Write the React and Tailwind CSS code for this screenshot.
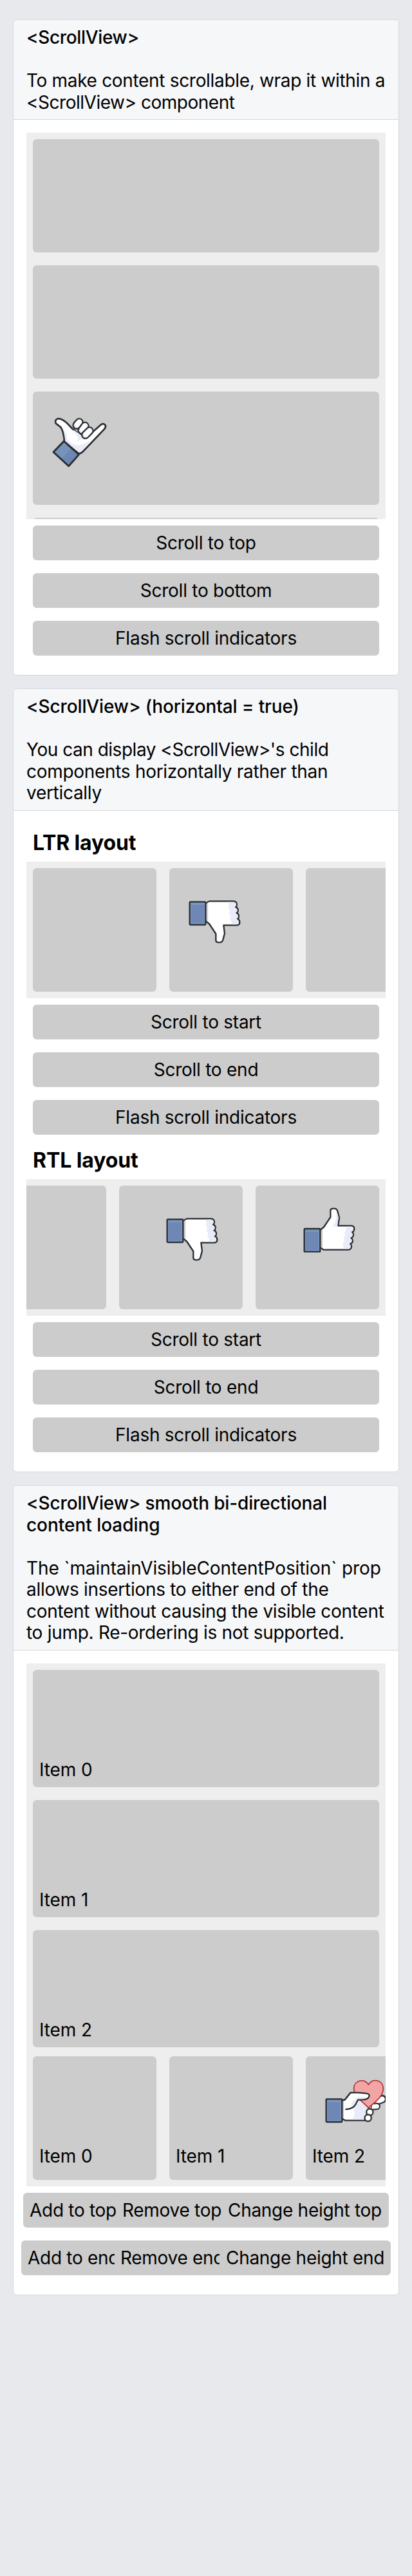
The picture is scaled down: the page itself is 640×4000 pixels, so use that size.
import React from "react";

const INK = "#2b3036";

function Cuff({ x, y }) {
  return (
    <g>
      <rect x={x} y={y} width="74" height="107" rx="3" fill="#6e87b4" stroke={INK} strokeWidth="7" />
      <rect x={x + 5} y={y + 5} width="64" height="9" fill="#7c99b9" />
      <path d={`M${x + 6} ${y + 8}V${y + 101}H${x + 68}V${y + 8}`} fill="none" stroke="#86a0cb" strokeWidth="2.5" />
    </g>
  );
}

function Fist() {
  return (
    <g>
      <path
        d="M121 68Q128 59 137 58H248Q265 59 264 76Q262 84 258 86Q272 90 269 104Q267 112 262 113Q274 117 273 130Q272 138 267 140Q277 144 277 156Q277 170 262 170H202L207 208L199 238Q195 250 185 250H176Q166 249 166 240V210L136 165L121 152Z"
        fill="#fff"
        stroke={INK}
        strokeWidth="7"
        strokeLinejoin="round"
      />
      <path
        d="M222 62H248Q261 62 260 75Q259 82 251 86Q267 92 265 103Q263 111 255 113Q270 119 269 129Q268 138 260 140Q273 147 273 156Q273 165 262 166H237Q244 152 230 138Q241 125 226 114Q237 100 222 88Q232 75 222 62Z"
        fill="#e9ecf8"
      />
      <path d="M125 68V150" stroke="#cfcfcf" strokeWidth="9" />
    </g>
  );
}

function ThumbDown() {
  return (
    <svg className="h-[100px] w-[110px] shrink-0" viewBox="0 0 330 300">
      <Fist />
      <Cuff x={44} y={61} />
    </svg>
  );
}

function ThumbUp() {
  return (
    <svg className="h-[100px] w-[110px] shrink-0" viewBox="0 0 330 300">
      <g transform="matrix(1 0 0 -1 0 300)">
        <Fist />
        <path d="M173 172Q196 176 193 236Q203 222 203 208L197 166Q180 164 173 172Z" fill="#e9ecf8" />
      </g>
      <Cuff x={44} y={144} />
    </svg>
  );
}

function HandFingers() {
  const fingers = [
    [189, 107, 177, 121],
    [216, 124, 201, 145],
    [237, 147, 218, 166],
  ];
  return (
    <svg className="h-[130px] w-[130px] shrink-0" viewBox="0 0 390 390">
      <path
        d="M120 197Q117 152 103 130L80 112Q74 99 87 91Q103 87 128 107L158 138L214 182L252 152L291 118Q303 110 311 121Q315 131 306 139L207 243Q197 254 186 252Z"
        fill="#fff"
        stroke={INK}
        strokeWidth="8"
        strokeLinejoin="round"
      />
      <path
        d="M124 193Q123 158 110 132Q133 155 134 187Q155 216 190 214Q215 206 238 194L204 239Q195 247 187 246Z"
        fill="#e9ecf8"
      />
      <path d="M160 142L184 178Q186 188 172 202Q190 188 212 182L190 160Z" fill="#e9ecf8" />
      {fingers.map(([a, b, c, d]) => (
        <g key={a} strokeLinecap="round">
          <line x1={a} y1={b} x2={c} y2={d} stroke={INK} strokeWidth="40" />
          <line x1={a} y1={b} x2={c} y2={d} stroke="#e9ecf8" strokeWidth="26" />
          <line x1={a + 1} y1={b - 1} x2={c + 4} y2={d - 4} stroke="#fff" strokeWidth="23" />
        </g>
      ))}
      <path d="M118 195L187 258L140 311L69 246Z" fill="#7693b9" stroke={INK} strokeWidth="9" strokeLinejoin="round" />
      <path d="M149 230L181 258L140 304L110 276Z" fill="#6d86b4" />
    </svg>
  );
}

function HandHeart() {
  return (
    <svg className="h-[110px] w-[150px] shrink-0" viewBox="0 0 450 330">
      <g strokeLinecap="round">
        <line x1="282" y1="160" x2="312" y2="148" stroke={INK} strokeWidth="39" />
        <line x1="282" y1="160" x2="311" y2="149" stroke="#fff" strokeWidth="25" />
        <line x1="262" y1="184" x2="286" y2="182" stroke={INK} strokeWidth="34" />
        <line x1="262" y1="184" x2="286" y2="182" stroke="#fff" strokeWidth="21" />
      </g>
      <path
        d="M124 155L138 151L163 119H212L262 170L247 248H140L124 239Z"
        fill="#fff"
        stroke={INK}
        strokeWidth="7"
        strokeLinejoin="round"
      />
      <path d="M200 152L262 168L246 244H168Q180 235 182 215L178 196Q190 184 200 152Z" fill="#e9ecf8" />
      <path d="M128 160V236" stroke="#cfcfcf" strokeWidth="9" />
      <circle cx="253" cy="209" r="15.5" fill="#fff" stroke={INK} strokeWidth="7" />
      <circle cx="245" cy="236" r="15.5" fill="#fff" stroke={INK} strokeWidth="7" />
      <path
        d="M247 190C236 172 180 140 179 100C180 58 232 50 247 81C264 50 315 56 316 100C314 145 268 166 247 190Z"
        fill="#f3a5a5"
        stroke="#b02d33"
        strokeWidth="5"
        strokeLinejoin="round"
      />
      <path d="M142 196Q178 192 188 172L198 152H225Q248 148 251 134Q252 124 236 122L210 118H163L138 151L134 185Z" fill="#fff" />
      <path d="M172 162L198 138H232L225 150H198L190 166Q180 180 164 184Z" fill="#e9ecf8" />
      <path
        d="M124 155L138 151L163 119Q190 116 236 122Q252 124 251 134Q248 148 225 151L198 152L188 172Q176 194 142 196"
        fill="none"
        stroke={INK}
        strokeWidth="7"
        strokeLinecap="round"
        strokeLinejoin="round"
      />
      <Cuff x={50} y={148} />
    </svg>
  );
}

function Card({ title, description, children }) {
  return (
    <section className="overflow-hidden rounded-[6px] border border-[#d6d7da] bg-white">
      <header className="border-b border-[#d6d7da] bg-[#f6f7f9] pt-[11px] pb-[9px] pl-5 whitespace-nowrap">
        <h2 className="font-medium">{title}</h2>
        <div className="h-[33.5px]" />
        <div>{description}</div>
      </header>
      <div className="flex flex-col px-5 pt-5 pb-[30px]">{children}</div>
    </section>
  );
}

function Button({ children }) {
  return (
    <button className="mx-[10px] h-[54px] rounded-[6px] bg-[#ccc] text-center leading-[34px] tracking-[-0.25px]">
      {children}
    </button>
  );
}

function Buttons({ labels }) {
  return (
    <div className="flex flex-col gap-5 pt-[10px]">
      {labels.map((label) => (
        <Button key={label}>{label}</Button>
      ))}
    </div>
  );
}

const tile = "w-[192px] h-[192px] shrink-0 rounded-[6px] bg-[#ccc] overflow-hidden";

function Label({ children }) {
  return <span className="pl-[10px] leading-[34px] tracking-[-0.1px]">{children}</span>;
}

export default function App() {
  return (
    <main className="flex h-[4000px] flex-col gap-5 overflow-hidden bg-[#e8e9ed] px-5 pt-[30px] font-['Inter',sans-serif] text-[28px] leading-[33.5px] text-black">
      <div className="h-[1019px]">
        <Card
          title={<p className="tracking-[-0.36px]">{"<ScrollView>"}</p>}
          description={
            <>
              <p className="tracking-[-0.32px]">To make content scrollable, wrap it within a</p>
              <p className="tracking-[-0.48px]">{"<ScrollView> component"}</p>
            </>
          }
        >
          <div className="flex h-[600px] flex-col gap-5 overflow-hidden bg-[#eee] p-[10px]">
            <div className="h-[176px] shrink-0 rounded-[6px] bg-[#ccc]" />
            <div className="h-[176px] shrink-0 rounded-[6px] bg-[#ccc]" />
            <div className="h-[176px] shrink-0 rounded-[6px] bg-[#ccc] pt-3 pl-[9px]">
              <HandFingers />
            </div>
            <div className="h-[176px] shrink-0 rounded-[6px] bg-[#ccc]" />
          </div>
          <Buttons labels={["Scroll to top", "Scroll to bottom", "Flash scroll indicators"]} />
        </Card>
      </div>

      <div className="h-[1217px]">
        <Card
          title={<p className="tracking-[-0.13px]">{"<ScrollView> (horizontal = true)"}</p>}
          description={
            <>
              <p className="tracking-[-0.48px]">{"You can display <ScrollView>'s child"}</p>
              <p className="tracking-[-0.3px]">components horizontally rather than</p>
              <p className="tracking-[-0.3px]">vertically</p>
            </>
          }
        >
          <h3 className="mb-[10px] pt-[11px] pl-[10px] text-[32px] leading-[38px] font-bold tracking-[-0.15px]">LTR layout</h3>
          <div className="flex h-[212px] gap-5 overflow-hidden bg-[#eee] p-[10px]">
            <div className={tile} />
            <div className={`${tile} pt-8 pl-[17px]`}>
              <ThumbDown />
            </div>
            <div className={tile} />
          </div>
          <Buttons labels={["Scroll to start", "Scroll to end", "Flash scroll indicators"]} />
          <h3 className="mt-[21px] mb-[10px] pl-[10px] text-[32px] leading-[38px] font-bold tracking-[-0.1px]">RTL layout</h3>
          <div className="flex h-[212px] flex-row-reverse gap-5 overflow-hidden bg-[#eee] p-[10px]">
            <div className={`${tile} pt-[19px] pl-[61px]`}>
              <ThumbUp />
            </div>
            <div className={`${tile} pt-8 pl-[60px]`}>
              <ThumbDown />
            </div>
            <div className={tile} />
          </div>
          <Buttons labels={["Scroll to start", "Scroll to end", "Flash scroll indicators"]} />
        </Card>
      </div>

      <Card
        title={
          <>
            <p className="tracking-[-0.15px]">{"<ScrollView> smooth bi-directional"}</p>
            <p className="tracking-[-0.04px]">content loading</p>
          </>
        }
        description={
          <>
            <p className="tracking-[-0.09px]">The `maintainVisibleContentPosition` prop</p>
            <p className="tracking-[-0.29px]">allows insertions to either end of the</p>
            <p className="tracking-[-0.29px]">content without causing the visible content</p>
            <p className="tracking-[-0.29px]">to jump. Re-ordering is not supported.</p>
          </>
        }
      >
        <div className="flex h-[600px] flex-col gap-5 overflow-hidden bg-[#eee] p-[10px]">
          {["Item 0", "Item 1", "Item 2"].map((item) => (
            <div key={item} className="flex h-[182px] shrink-0 flex-col justify-end rounded-[6px] bg-[#ccc] pb-[10px]">
              <Label>{item}</Label>
            </div>
          ))}
        </div>
        <div className="flex h-[212px] gap-5 overflow-hidden bg-[#eee] p-[10px]">
          <div className={`${tile} flex flex-col justify-end pb-[20px]`}>
            <Label>Item 0</Label>
          </div>
          <div className={`${tile} flex flex-col justify-end pb-[20px]`}>
            <Label>Item 1</Label>
          </div>
          <div className={`${tile} flex flex-col justify-end pb-[20px]`}>
            <div className="mb-[11px] pl-[15px]">
              <HandHeart />
            </div>
            <Label>Item 2</Label>
          </div>
        </div>
        <div className="-mx-2 flex flex-col gap-5 pt-[10px] leading-[34px] tracking-[-0.29px] whitespace-nowrap">
          <div className="ml-[3px] flex h-[54px] w-[568px]">
            <button className="w-[155px] shrink-0 rounded-[6px] bg-[#ccc] pl-[10px] text-left">Add to top</button>
            <button className="-ml-[10px] w-[173px] shrink-0 rounded-[6px] bg-[#ccc] pl-[9px] text-left">Remove top</button>
            <button className="-ml-[10px] flex-1 rounded-[6px] bg-[#ccc] pl-[10px] text-left">Change height top</button>
          </div>
          <div className="flex h-[54px] w-[574px]">
            <button className="w-[155px] shrink-0 rounded-[6px] bg-[#ccc] pl-[10px] text-left">Add to end</button>
            <button className="-ml-[10px] w-[173px] shrink-0 rounded-[6px] bg-[#ccc] pl-[9px] text-left">Remove end</button>
            <button className="-ml-[10px] flex-1 rounded-[6px] bg-[#ccc] pl-[10px] text-left">Change height end</button>
          </div>
        </div>
      </Card>
    </main>
  );
}
